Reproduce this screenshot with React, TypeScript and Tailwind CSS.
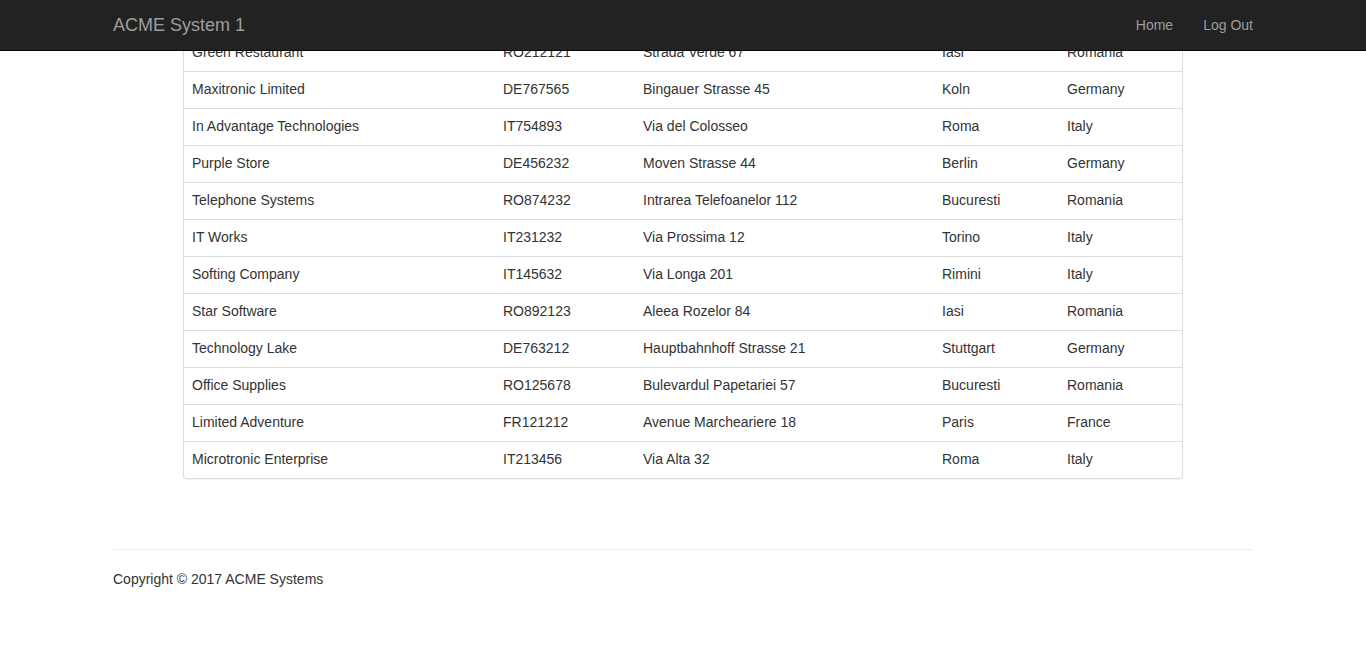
import React from "react";

const rows: [string, string, string, string, string][] = [
  ["Green Restaurant", "RO212121", "Strada Verde 67", "Iasi", "Romania"],
  ["Maxitronic Limited", "DE767565", "Bingauer Strasse 45", "Koln", "Germany"],
  ["In Advantage Technologies", "IT754893", "Via del Colosseo", "Roma", "Italy"],
  ["Purple Store", "DE456232", "Moven Strasse 44", "Berlin", "Germany"],
  ["Telephone Systems", "RO874232", "Intrarea Telefoanelor 112", "Bucuresti", "Romania"],
  ["IT Works", "IT231232", "Via Prossima 12", "Torino", "Italy"],
  ["Softing Company", "IT145632", "Via Longa 201", "Rimini", "Italy"],
  ["Star Software", "RO892123", "Aleea Rozelor 84", "Iasi", "Romania"],
  ["Technology Lake", "DE763212", "Hauptbahnhoff Strasse 21", "Stuttgart", "Germany"],
  ["Office Supplies", "RO125678", "Bulevardul Papetariei 57", "Bucuresti", "Romania"],
  ["Limited Adventure", "FR121212", "Avenue Marcheariere 18", "Paris", "France"],
  ["Microtronic Enterprise", "IT213456", "Via Alta 32", "Roma", "Italy"],
];

export default function App() {
  return (
    <div
      className="min-h-[650px] bg-white text-[14px] leading-[20px] text-[#333]"
      style={{ fontFamily: '"Liberation Sans", Arial, sans-serif' }}
    >
      <nav className="fixed left-0 right-0 top-0 z-10 h-[51px] border-b border-[#080808] bg-[#222]">
        <div className="mx-auto flex w-[1170px] items-start justify-between px-[15px]">
          <div className="py-[15px] text-[18px] leading-[20px] text-[#9d9d9d]">ACME System 1</div>
          <div className="-mr-[15px] flex">
            <div className="p-[15px] text-[#9d9d9d]">Home</div>
            <div className="p-[15px] text-[#9d9d9d]">Log Out</div>
          </div>
        </div>
      </nav>

      <div className="mx-auto w-[1170px] px-[15px] pt-[34px]">
        <div className="mx-auto w-[1000px] overflow-hidden rounded-b-[4px] border-x border-b border-[#ddd] shadow-[0_1px_1px_rgba(0,0,0,0.05)]">
          <table className="w-full table-fixed border-collapse">
            <colgroup>
              <col className="w-[311px]" />
              <col className="w-[140px]" />
              <col className="w-[299px]" />
              <col className="w-[125px]" />
              <col />
            </colgroup>
            <tbody>
              {rows.map((r) => (
                <tr key={r[0]} className="border-t border-[#ddd]">
                  {r.map((c, i) => (
                    <td key={i} className="h-[36px] px-[8px] pb-[9px] pt-[7px] align-top leading-[20px]">
                      {c}
                    </td>
                  ))}
                </tr>
              ))}
            </tbody>
          </table>
        </div>

        <footer className="mt-[70px] border-t border-[#eee] pt-[19px]">
          <p>Copyright © 2017 ACME Systems</p>
        </footer>
      </div>
    </div>
  );
}
